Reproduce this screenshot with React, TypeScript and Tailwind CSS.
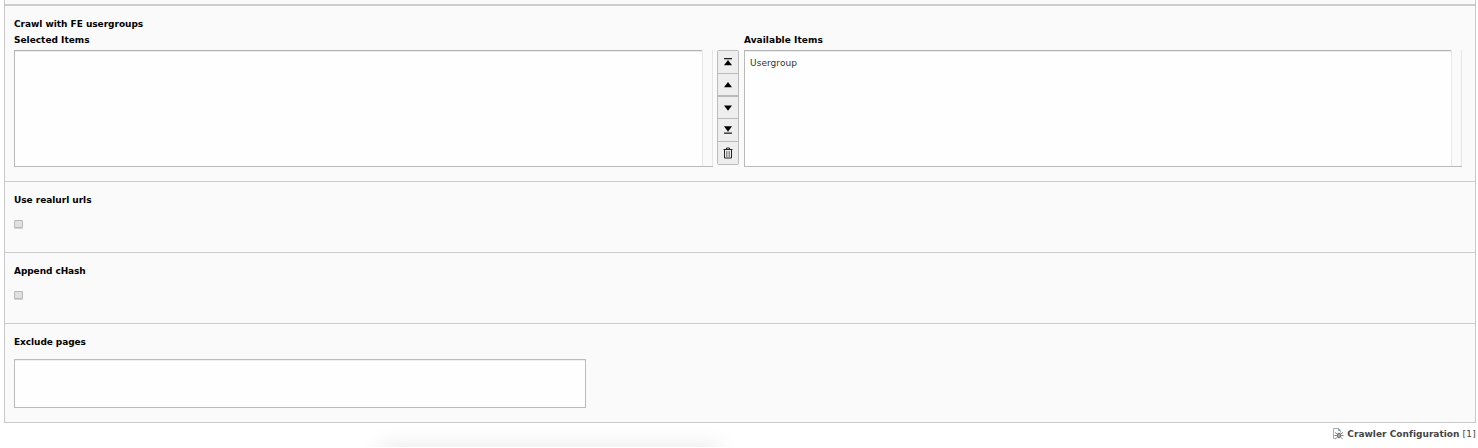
import React from "react";

const label = "block whitespace-nowrap text-[9px] leading-4 font-bold text-black";

function ListBox({ items, width }: { items: string[]; width: string }) {
  return (
    <div className={`flex h-[117px] border-b border-l border-[#b9b9b9] bg-[#fafafa] ${width}`}>
      <div className="grow border-t border-[#b3b3b3] bg-[#fefefe] pt-1 pl-[5px] shadow-[inset_0_1px_0_#ececec]">
        {items.map((item) => (
          <div key={item} className="text-[9px] leading-4 tracking-[0.06px] text-[#333333]">
            {item}
          </div>
        ))}
      </div>
      <div className="w-[11px] border-x border-[#e6e6e6]" />
    </div>
  );
}

function Controls() {
  const cell = "flex shrink-0 items-center justify-center bg-[#eeeeee]";
  return (
    <div className="ml-1 flex h-[115px] w-[22px] flex-col rounded-[2px] border border-[#bbbbbb]">
      <button className={`${cell} h-[22px]`} aria-label="Move to top">
        <svg width="10" height="10" viewBox="0 0 10 10">
          <path d="M1 1h8v1.3H1z" fill="#222" />
          <path d="M5 3l4 5.3H1z" fill="#000" />
        </svg>
      </button>
      <button className={`${cell} h-[22px] border-t border-[#bbbbbb]`} aria-label="Move up">
        <svg width="10" height="10" viewBox="0 0 10 10">
          <path d="M5 2l4 5.2H1z" fill="#000" />
        </svg>
      </button>
      <button className={`${cell} h-[23px] border-t-2 border-[#bbbbbb]`} aria-label="Move down">
        <svg width="10" height="10" viewBox="0 0 10 10">
          <path d="M5 7.7L1 2.5h8z" fill="#000" />
        </svg>
      </button>
      <button className={`${cell} h-[23px] border-t border-[#bbbbbb]`} aria-label="Move to bottom">
        <svg width="10" height="10" viewBox="0 0 10 10">
          <path d="M5 6.7L1 1.2h8z" fill="#000" />
          <path d="M1 7.5h8v1.3H1z" fill="#222" />
        </svg>
      </button>
      <button className={`${cell} h-[23px] border-t border-[#bbbbbb]`} aria-label="Remove">
        <svg width="10" height="12" viewBox="0 0 10 12" fill="none" stroke="#222">
          <path d="M.5 2.5h9M3.5 2V1h3v1M1.5 3v8h7V3" />
          <path d="M3.5 4v6M5 4v6M6.5 4v6" stroke="#777" strokeWidth=".8" />
        </svg>
      </button>
    </div>
  );
}

function CheckSection({ title, tracking }: { title: string; tracking: string }) {
  return (
    <section className="h-[71px] border-b border-[#cccccc] pt-[10px] pl-[9px]">
      <span className={`${label} ${tracking}`}>{title}</span>
      <div className="mt-3 h-2 w-[9px] rounded-[1px] border border-[#b8b8b8] bg-[#e0e0e0] shadow-[0_1px_0_#d2d2d2]" />
    </section>
  );
}

export default function App() {
  return (
    <div
      className="flex h-[448px] w-[1478px] flex-col overflow-hidden bg-white"
      style={{ fontFamily: '"DejaVu Sans", Verdana, sans-serif' }}
    >
      <div className="ml-1 flex h-[423px] w-[1472px] shrink-0 flex-col border-x border-b border-[#c8c8c8] bg-[#fafafa]">
        <div className="h-[6px] shrink-0 border-b-2 border-[#cccccc]" />
        <section className="h-[176px] shrink-0 border-b border-[#cccccc] pt-[10px] pl-[9px]">
          <span className={`${label} tracking-[-0.03px]`}>Crawl with FE usergroups</span>
          <div className="flex">
            <div className="w-[730px]">
              <span className={label}>Selected Items</span>
              <div className="mt-[2px] flex">
                <ListBox items={[]} width="w-[699px]" />
                <Controls />
              </div>
            </div>
            <div>
              <span className={`${label} tracking-[0.05px]`}>Available Items</span>
              <div className="mt-[2px]">
                <ListBox items={["Usergroup"]} width="w-[718px]" />
              </div>
            </div>
          </div>
        </section>
        <CheckSection title="Use realurl urls" tracking="tracking-[-0.03px]" />
        <CheckSection title="Append cHash" tracking="tracking-[-0.08px]" />
        <section className="pt-[10px] pl-[9px]">
          <span className={`${label} tracking-[-0.08px]`}>Exclude pages</span>
          <div className="mt-[9px] h-[49px] w-[572px] border border-[#bbbbbb] bg-[#fefefe] shadow-[inset_0_1px_0_#eeeeee]" />
        </section>
      </div>
      <footer className="relative h-[25px]">
        <div className="absolute top-0 left-[350px] h-6 w-[400px] overflow-hidden">
          <div className="mx-auto mt-[26px] h-5 w-[330px] shadow-[0_0_22px_5px_#00000014]" />
        </div>
        <div className="flex h-[22px] items-center justify-end pr-[2px] text-[9px] leading-4 whitespace-nowrap text-[#444444]">
          <svg className="mr-[3px]" width="12" height="12" viewBox="0 0 12 12" fill="none">
            <path d="M1.5 10.5V.5h5l2 2v2M1.5 10.5H4" stroke="#a5adb5" />
            <path d="M6.5 .5v2h2" stroke="#8199ad" />
            <ellipse cx="7" cy="7.5" rx="1.6" ry="2.4" fill="#aaa" stroke="#555" strokeWidth=".8" />
            <path d="M5.5 6L3 4.5M5.5 7.5H2.5M5.5 9L3.5 10.8M8.5 6L11 4.5M8.5 7.5h3M8.5 9l2 1.8" stroke="#666" strokeWidth=".8" />
          </svg>
          <strong className="tracking-[0.02px]">Crawler Configuration</strong>
          <span className="ml-[3px] tracking-[0.25px]">[1]</span>
        </div>
      </footer>
    </div>
  );
}
